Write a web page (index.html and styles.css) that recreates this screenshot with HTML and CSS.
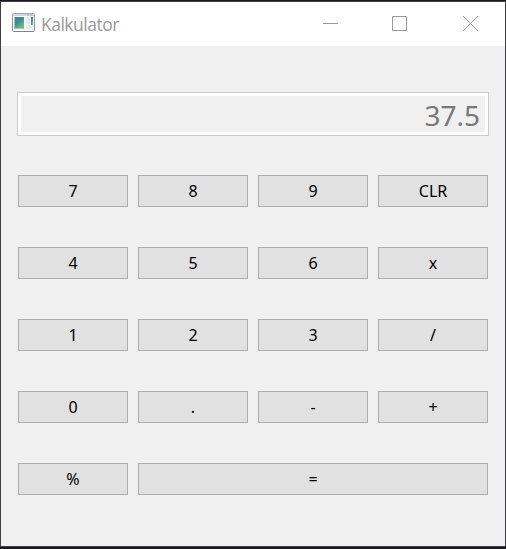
FILE: index.html
```html
<!DOCTYPE html>
<html lang="en">
<head>
<meta charset="utf-8">
<title>Kalkulator</title>
<link rel="stylesheet" href="styles.css">
</head>
<body>
<div class="window">
  <header class="titlebar">
    <svg class="app-icon" width="23" height="20" viewBox="0 0 23 20">
      <defs>
        <linearGradient id="pane" x1="0" y1="0" x2="0.6" y2="1">
          <stop offset="0" stop-color="#4779a5"/>
          <stop offset="0.5" stop-color="#3f8d92"/>
          <stop offset="1" stop-color="#73b982"/>
        </linearGradient>
        <linearGradient id="frame" x1="0" y1="0" x2="0" y2="1">
          <stop offset="0" stop-color="#a2a8ae"/>
          <stop offset="1" stop-color="#7f868d"/>
        </linearGradient>
      </defs>
      <rect x="0.5" y="0.5" width="22" height="18" rx="1" fill="#f8f9fa" stroke="url(#frame)"/>
      <rect x="1" y="1" width="21" height="2" fill="#d0d7e0"/>
      <path d="M15 2h2M18 2h3" stroke="#a9b6c7"/>
      <rect x="2" y="4" width="10" height="12" fill="#a8bfcc"/>
      <rect x="3" y="4" width="9" height="11" fill="url(#pane)"/>
      <rect x="14" y="4" width="4" height="7" fill="#e7e8ea"/>
      <rect x="14" y="12" width="7" height="4" fill="#ebecee"/>
      <rect x="19" y="4" width="2" height="8" fill="url(#pane)"/>
    </svg>
    <span class="title">Kalkulator</span>
    <div class="controls">
      <svg width="15" height="15" viewBox="0 0 15 15"><path d="M0 7.5h15"/></svg>
      <svg width="15" height="15" viewBox="0 0 15 15"><path d="M.5.5h14v14H.5z"/></svg>
      <svg class="close" width="15" height="15" viewBox="0 0 15 15"><path d="M0 0l15 15M15 0L0 15"/></svg>
    </div>
  </header>
  <main class="calculator">
    <output class="display">37.5</output>
    <div class="keys">
      <button>7</button><button>8</button><button>9</button><button>CLR</button>
      <button>4</button><button>5</button><button>6</button><button>x</button>
      <button>1</button><button>2</button><button>3</button><button>/</button>
      <button>0</button><button>.</button><button>-</button><button>+</button>
      <button>%</button><button class="equals">=</button>
    </div>
  </main>
</div>
</body>
</html>
```
FILE: styles.css
```css
* { box-sizing: border-box; }

body {
  margin: 0;
  height: 549px;
  overflow: hidden;
  background: #1d1b22;
  padding-top: 1px;
  padding-bottom: 2px;
}

.window {
  height: 546px;
  border: 1px solid #3f3e45;
  background: #f0f0f0;
}

.titlebar {
  display: flex;
  align-items: center;
  height: 44px;
  padding: 0 27px 0 11px;
  background: #fff;
}

.app-icon { margin-top: -3px; }

.title {
  margin-left: 6px;
  font: 17.5px/24px "Open Sans", sans-serif;
  letter-spacing: -0.5px;
  color: #999;
}

.controls {
  display: flex;
  gap: 54px;
  margin: -1px 0 0 auto;
}

.controls svg {
  fill: none;
  stroke: #999;
}

.controls .close { margin-left: 2px; }

.calculator { padding: 46px 16px 0; }

.display {
  display: block;
  height: 44px;
  border: 1px solid #ccc;
  background: #f0f0f0;
  box-shadow: inset 0 0 0 3px #fff;
  padding-right: 8px;
  font: 28px/44px "Noto Sans", sans-serif;
  color: #787878;
  text-align: right;
}

.keys {
  display: grid;
  grid-template-columns: repeat(4, 110px);
  grid-auto-rows: 32px;
  gap: 40px 10px;
  margin: 39px 0 0 1px;
}

.keys button {
  padding: 0;
  border: 1px solid #adadad;
  background: #e1e1e1;
  font: 16px/30px "Noto Sans", sans-serif;
  color: #000;
}

.keys .equals { grid-column: span 3; }
```
